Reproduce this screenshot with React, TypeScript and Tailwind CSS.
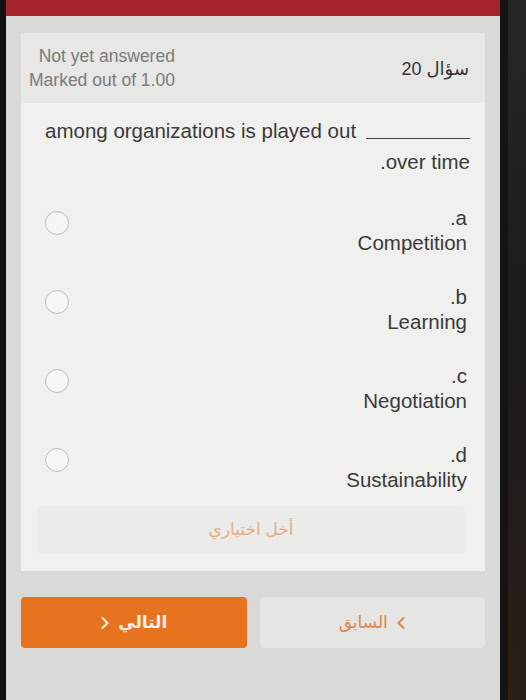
import React from 'react';

const options = [
  { key: 'a', label: 'Competition' },
  { key: 'b', label: 'Learning' },
  { key: 'c', label: 'Negotiation' },
  { key: 'd', label: 'Sustainability' },
];

const Chevron: React.FC<{ dir: 'left' | 'right'; className?: string }> = ({ dir, className }) => (
  <svg width="10" height="14" viewBox="0 0 10 14" className={className} fill="none">
    <path
      d={dir === 'right' ? 'M2.5 2 L7.5 7 L2.5 12' : 'M7.5 2 L2.5 7 L7.5 12'}
      stroke="currentColor"
      strokeWidth="2"
      strokeLinecap="round"
      strokeLinejoin="round"
    />
  </svg>
);

export default function App() {
  return (
    <div className="flex h-[700px] w-[526px] overflow-hidden bg-[#141414] font-['Liberation_Sans','DejaVu_Sans',sans-serif]">
      <div className="w-[6px] shrink-0 bg-[#111]" />

      {/* screen */}
      <div className="flex w-[494px] shrink-0 flex-col bg-[#d9d9d7]">
        <div className="h-[16px] bg-[#a5232a]" />

        <div className="mx-[15px] mt-[17px] flex h-[70px] items-center justify-between bg-[#e7e7e5] pl-[8px] pr-[16px]">
          <div className="text-right text-[17.5px] leading-[24px] text-[#7b7b7b]">
            <div>Not yet answered</div>
            <div>Marked out of 1.00</div>
          </div>
          <div dir="rtl" className="pt-[2px] text-[18px] text-[#333]">
            سؤال 20
          </div>
        </div>

        <div className="mx-[15px] flex flex-col bg-[#f0f0ee] pb-[17px] pl-[24px] pr-[15px] pt-[12px]">
          <div className="flex items-end text-[20.5px] leading-[31px] text-[#3a3a3a]">
            <span>among organizations is played out</span>
            <span className="mb-[7px] ml-auto w-[104px] border-b-[1.5px] border-[#444]" />
          </div>
          <div className="text-right text-[20.5px] leading-[31px] text-[#3a3a3a]">.over time</div>

          <div className="mt-[28px] flex flex-col gap-[29px]">
            {options.map(o => (
              <div key={o.key} className="flex items-start justify-between">
                <span className="mt-[6px] h-[24px] w-[24px] rounded-full border-[1.5px] border-[#bcbcbc] bg-[#f6f6f4]" />
                <div className="pr-[3px] text-right text-[20.5px] leading-[25px] text-[#3a3a3a]">
                  <div>.{o.key}</div>
                  <div>{o.label}</div>
                </div>
              </div>
            ))}
          </div>

          <div className="mr-[5px] ml-[-8px] mt-[14px] flex h-[48px] items-center justify-center rounded-sm bg-[#ebebe9]">
            <span dir="rtl" className="text-[17px] text-[#e8ab89]">
              أخل اختياري
            </span>
          </div>
        </div>

        <div className="mx-[15px] mt-[26px] flex gap-[13px]">
          <button className="flex h-[51px] flex-1 items-center justify-center gap-[8px] rounded-[4px] bg-[#e8731f] text-[17px] font-bold text-[#fdf1e8]">
            <Chevron dir="right" />
            <span dir="rtl">التالي</span>
          </button>
          <button className="flex h-[51px] flex-1 items-center justify-center gap-[8px] rounded-[4px] bg-[#e5e5e3] text-[17px] text-[#dc8550]">
            <span dir="rtl">السابق</span>
            <Chevron dir="left" />
          </button>
        </div>
      </div>

      <div className="flex flex-1 bg-linear-to-b from-[#262626] via-[#1b1b1b] to-[#2b1f18]">
        <div className="w-[8px] bg-[#141414]" />
      </div>
    </div>
  );
}
